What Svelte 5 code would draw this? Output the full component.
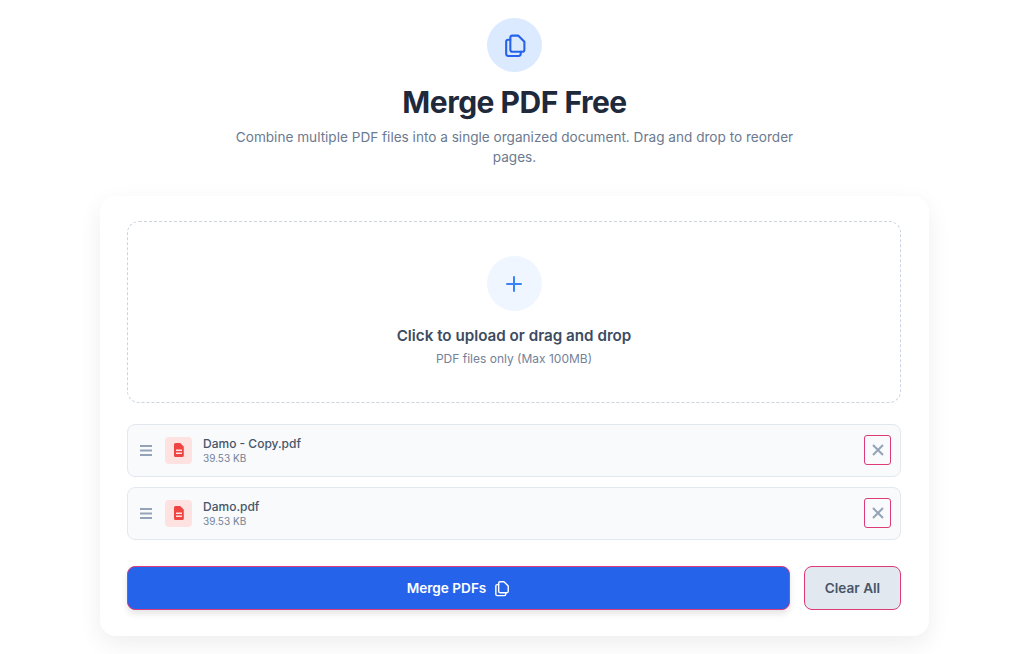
<script>
  const files = [
    { name: 'Damo - Copy.pdf', size: '39.53 KB' },
    { name: 'Damo.pdf', size: '39.53 KB' }
  ];
</script>

<main class="page">
  <header class="head">
    <div class="head-icon">
      <svg width="25" height="25" viewBox="0 0 24 24" fill="none" stroke="currentColor" stroke-width="2" stroke-linecap="round" stroke-linejoin="round">
        <path d="M10 2.500h5.500l6 6V16a2 2 0 0 1-2 2H10a2 2 0 0 1-2-2V4.500a2 2 0 0 1 2-2z" />
        <path d="M8 6.500H6a2 2 0 0 0-2 2V20a2 2 0 0 0 2 2h10a2 2 0 0 0 2-2v-2" />
      </svg>
    </div>
    <h1>Merge PDF Free</h1>
    <p>Combine multiple PDF files into a single organized document. Drag and drop to reorder pages.</p>
  </header>

  <section class="card">
    <div class="drop">
      <div class="plus">
        <svg width="24" height="24" viewBox="0 0 24 24" fill="none" stroke="currentColor" stroke-width="2" stroke-linecap="round">
          <path d="M12 5v14M5 12h14" />
        </svg>
      </div>
      <div class="drop-title">Click to upload or drag and drop</div>
      <div class="drop-sub">PDF files only (Max 100MB)</div>
    </div>

    <ul class="files">
      {#each files as file}
        <li class="file">
          <svg class="grip" width="20" height="20" viewBox="0 0 20 20" fill="none" stroke="currentColor" stroke-width="2">
            <path d="M4 6h12M4 10.500h12M4 15h12" />
          </svg>
          <div class="pdf">
            <svg width="16" height="16" viewBox="0 0 16 16">
              <path fill="#ef4444" d="M4.500 1h4.300a1 1 0 0 1 .7.300l3 3a1 1 0 0 1 .3.700v8.500a1.500 1.500 0 0 1-1.500 1.500h-6.800a1.500 1.500 0 0 1-1.500-1.500v-11a1.500 1.500 0 0 1 1.500-1.500z" />
              <path stroke="#fee2e2" stroke-width="1.400" d="M5 8.300h6M5 11.300h6" />
            </svg>
          </div>
          <div class="info">
            <div class="name">{file.name}</div>
            <div class="size">{file.size}</div>
          </div>
          <button class="remove" aria-label="Remove">
            <svg width="20" height="20" viewBox="0 0 20 20" fill="none" stroke="currentColor" stroke-width="2">
              <path d="M5 5l10 10M15 5L5 15" />
            </svg>
          </button>
        </li>
      {/each}
    </ul>

    <div class="actions">
      <button class="merge">
        Merge PDFs
        <svg width="17" height="17" viewBox="0 0 24 24" fill="none" stroke="currentColor" stroke-width="2" stroke-linecap="round" stroke-linejoin="round">
          <path d="M10 2.500h5.500l6 6V16a2 2 0 0 1-2 2H10a2 2 0 0 1-2-2V4.500a2 2 0 0 1 2-2z" />
          <path d="M8 6.500H6a2 2 0 0 0-2 2V20a2 2 0 0 0 2 2h10a2 2 0 0 0 2-2v-2" />
        </svg>
      </button>
      <button class="clear">Clear All</button>
    </div>
  </section>
</main>

<style>
  :global(body) {
    margin: 0;
    background: #fff;
    font-family: Inter, "Liberation Sans", sans-serif;
  }

  .page {
    box-sizing: border-box;
    width: 1029px;
    height: 654px;
    overflow: hidden;
    padding-top: 18px;
  }

  .head {
    display: flex;
    flex-direction: column;
    align-items: center;
    text-align: center;
  }

  .head-icon {
    width: 55px;
    height: 54px;
    border-radius: 50%;
    background: #dbeafe;
    color: #2563eb;
    display: flex;
    align-items: center;
    justify-content: center;
  }

  h1 {
    margin: 11px 0 0;
    font-size: 30px;
    line-height: 38px;
    font-weight: 700;
    letter-spacing: -0.5px;
    color: #1e293b;
  }

  .head p {
    margin: 6px 0 0;
    width: 576px;
    font-size: 13.6px;
    line-height: 20px;
    color: #6b7a90;
  }

  .card {
    box-sizing: border-box;
    width: 829px;
    height: 440px;
    margin: 29px auto 0;
    padding: 25px 28px 0 27px;
    background: #fff;
    border-radius: 16px;
    box-shadow: 0 8px 24px rgba(0, 0, 0, 0.07);
  }

  .drop {
    box-sizing: border-box;
    height: 182px;
    border: 1px dashed #cbd5e1;
    border-radius: 12px;
    display: flex;
    flex-direction: column;
    align-items: center;
    padding-top: 34px;
  }

  .plus {
    width: 55px;
    height: 55px;
    border-radius: 50%;
    background: #eff6ff;
    color: #3b82f6;
    display: flex;
    align-items: center;
    justify-content: center;
  }

  .drop-title {
    margin-top: 14px;
    font-size: 15.2px;
    line-height: 22px;
    font-weight: 600;
    color: #3d4b61;
  }

  .drop-sub {
    margin-top: 4px;
    font-size: 12px;
    line-height: 16px;
    color: #748299;
  }

  .files {
    list-style: none;
    margin: 21px 0 0;
    padding: 0;
    display: flex;
    flex-direction: column;
    gap: 10.500px;
  }

  .file {
    box-sizing: border-box;
    height: 52.500px;
    display: flex;
    align-items: center;
    padding: 0 9px 0 8px;
    background: #f8fafc;
    border: 1px solid #e2e8f0;
    border-radius: 8px;
  }

  .grip {
    color: #94a3b8;
    flex: none;
  }

  .pdf {
    width: 27px;
    height: 27px;
    margin-left: 9px;
    border-radius: 4px;
    background: #fee2e2;
    display: flex;
    align-items: center;
    justify-content: center;
  }

  .info {
    flex: 1;
    margin-left: 11px;
  }

  .name {
    font-size: 12px;
    line-height: 16px;
    font-weight: 500;
    color: #475569;
  }

  .size {
    font-size: 10px;
    line-height: 13px;
    color: #748299;
  }

  button {
    font-family: inherit;
    cursor: pointer;
  }

  .remove {
    box-sizing: border-box;
    width: 27px;
    height: 30px;
    padding: 0;
    background: transparent;
    border: 1px solid #dc3a78;
    border-radius: 3px;
    color: #94a3b8;
    display: flex;
    align-items: center;
    justify-content: center;
  }

  .actions {
    display: flex;
    gap: 14px;
    margin-top: 26.500px;
  }

  .merge {
    box-sizing: border-box;
    flex: 1;
    height: 44px;
    border: 1px solid #dc3a78;
    border-radius: 8px;
    background: #2563eb;
    color: #fff;
    font-size: 13.6px;
    font-weight: 600;
    display: flex;
    align-items: center;
    justify-content: center;
    gap: 7px;
    box-shadow: 0 4px 6px rgba(0, 0, 0, 0.1);
  }

  .clear {
    box-sizing: border-box;
    width: 97px;
    height: 44px;
    border: 1px solid #dc3a78;
    border-radius: 8px;
    background: #e2e8f0;
    color: #475569;
    font-size: 13.6px;
    font-weight: 600;
  }
</style>
